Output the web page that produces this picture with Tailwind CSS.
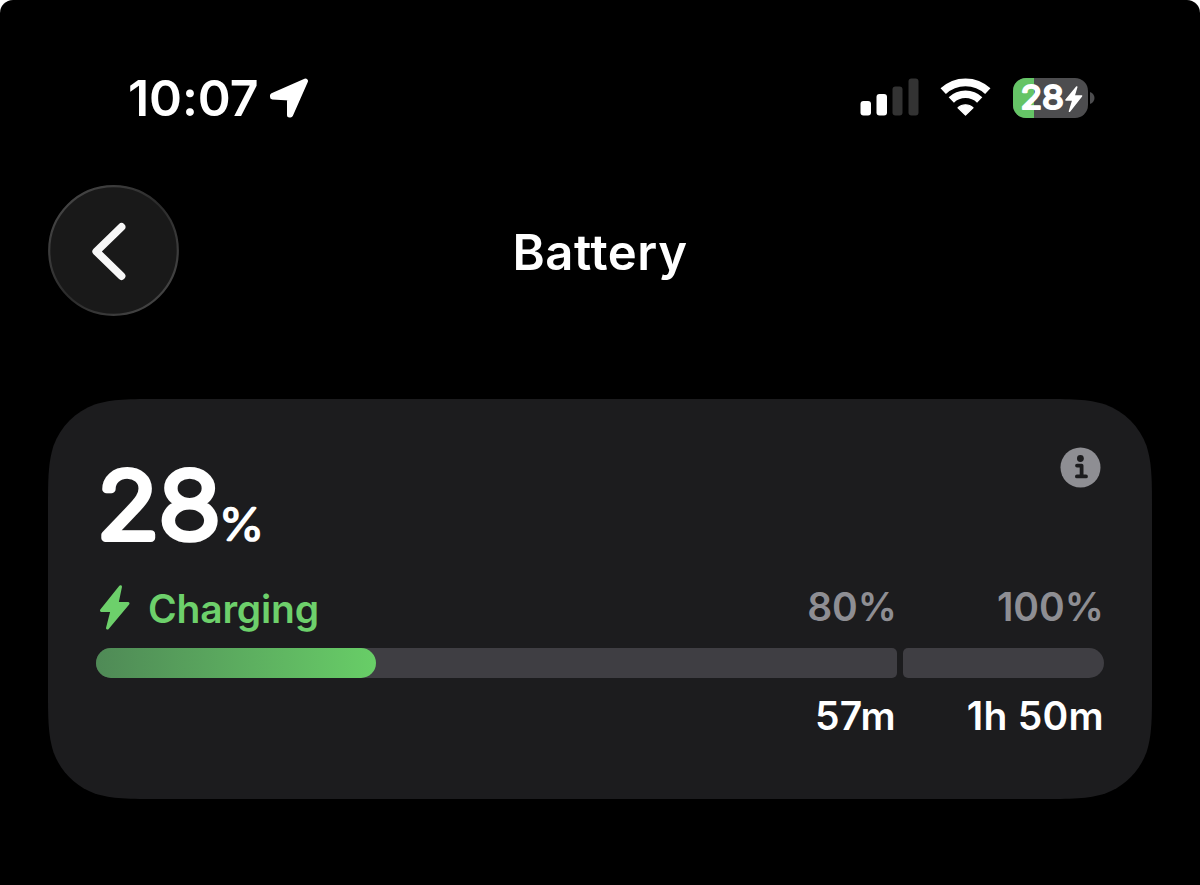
<!DOCTYPE html>
<html lang="en">
<head>
  <meta charset="UTF-8">
  <meta name="viewport" content="width=device-width, initial-scale=1.0">
  <title>Battery</title>
  <script src="https://cdn.jsdelivr.net/npm/@tailwindcss/browser@4"></script>
</head>
<body class="bg-white font-['Inter',sans-serif] text-white">
  <div class="w-[1200px] h-[885px] bg-black rounded-t-[13px] overflow-hidden">

    <!-- Status bar -->
    <header class="flex items-center justify-between h-[120px] pt-[76px] pl-[128px] pr-[105px]">
      <div class="flex items-center">
        <span class="w-[141px] text-[50px] leading-[44px] font-semibold tracking-[-0.1px] whitespace-nowrap">10:07</span>
        <svg class="w-[40px] h-[42px]" viewBox="0 0 40 42" fill="#fff" stroke="#fff" stroke-width="5" stroke-linejoin="round">
          <path d="M3.5 18.5 L36.5 4 L21.5 38 L20.5 38 L20.5 21 L3.5 20 Z"/>
        </svg>
      </div>
      <div class="flex items-center">
        <svg class="w-[59px] h-[44px] mr-[21px]" viewBox="0 0 59 44">
          <rect x="0.5" y="25" width="10.5" height="14.5" rx="3" fill="#fff"/>
          <rect x="16.5" y="18" width="10.5" height="21.5" rx="3" fill="#fff"/>
          <rect x="32.5" y="10.5" width="10" height="29" rx="3" fill="#333"/>
          <rect x="48.5" y="2.5" width="10" height="37" rx="3" fill="#333"/>
        </svg>
        <svg class="w-[51px] h-[44px] mr-[22px]" viewBox="0 0 51 44" fill="none" stroke="#fff">
          <path d="M3.2 15.2 A32.5 32.5 0 0 1 47.8 15.2" stroke-width="7.8"/>
          <path d="M11.3 24 A20.5 20.5 0 0 1 39.7 24" stroke-width="7.6"/>
          <path d="M25.5 39 L18 31.8 A10.8 10.8 0 0 1 33 31.8 Z" fill="#fff" stroke-width="1.2" stroke-linejoin="round"/>
        </svg>
        <div class="relative w-[75px] h-[40px] rounded-[13px] overflow-hidden bg-[#4d4d4f]">
          <div class="w-[21px] h-full bg-[#65c466]"></div>
          <svg class="absolute inset-0 w-[75px] h-[40px]" viewBox="0 0 75 40" fill="#fff">
            <text x="7.5" y="31.3" textLength="43.5" lengthAdjust="spacingAndGlyphs" font-family="Inter, sans-serif" font-size="33" font-weight="400" stroke="#fff" stroke-width="2.2" stroke-linejoin="round">28</text>
            <path d="M63.7 9 L53 22 L60 22 L56.5 33.2 L68.5 18 L61 18 Z" stroke="#fff" stroke-width="1.6" stroke-linejoin="round"/>
          </svg>
        </div>
        <svg class="w-[5px] h-[14px] ml-[2px]" viewBox="0 0 5 14" fill="#4d4d4f"><path d="M0 1 C6 3 6 11 0 13 Z"/></svg>
      </div>
    </header>

    <!-- Navigation bar -->
    <nav class="grid grid-cols-[131px_1fr_131px] items-center mt-[65px] px-[48px]">
      <button class="block size-[131px]" aria-label="Back">
        <svg class="size-[131px]" viewBox="0 0 131 131" fill="none">
          <defs>
            <linearGradient id="rim" x1="0" y1="0" x2="1" y2="1">
              <stop offset="0" stop-color="#4c4c4c"/>
              <stop offset="0.5" stop-color="#2b2b2b"/>
              <stop offset="1" stop-color="#4c4c4c"/>
            </linearGradient>
          </defs>
          <circle cx="65.5" cy="65.5" r="64.3" fill="#191919" stroke="url(#rim)" stroke-width="2.2"/>
          <path d="M73.5 42 L48.3 66.5 L73.5 91" stroke="#f7f7f7" stroke-width="7.8" stroke-linecap="round" stroke-linejoin="round"/>
        </svg>
      </button>
      <h1 class="text-center text-[49px] leading-[60px] font-semibold tracking-[0.6px] pt-[5px]">Battery</h1>
    </nav>

    <!-- Battery card -->
    <main class="relative mt-[83px] mx-[48px] h-[400px] px-[48px]">
      <svg class="absolute inset-0 w-[1104px] h-[400px]" viewBox="0 0 1104 400" fill="#1c1c1e">
        <path d="M113.1 0 H990.9 C1023.5 0 1039.7 0 1057.3 5.5 C1076.4 12.5 1091.5 27.6 1098.5 46.7 C1104 64.3 1104 80.5 1104 113.1 V286.9 C1104 319.5 1104 335.7 1098.5 353.3 C1091.5 372.4 1076.4 387.5 1057.3 394.5 C1039.7 400 1023.5 400 990.9 400 H113.1 C80.5 400 64.3 400 46.7 394.5 C27.6 387.5 12.5 372.4 5.5 353.3 C0 335.7 0 319.5 0 286.9 V113.1 C0 80.5 0 64.3 5.5 46.7 C12.5 27.6 27.6 12.5 46.7 5.5 C64.3 0 80.5 0 113.1 0 Z"/>
      </svg>

      <div class="relative">
        <div class="flex justify-between pt-[48px] h-[180px]">
          <svg class="w-[180px] h-[125px]" viewBox="0 0 180 125" fill="#fff" stroke="#fff" stroke-linejoin="round" font-family="Inter, sans-serif">
            <text x="1" y="90.5" textLength="123" lengthAdjust="spacingAndGlyphs" font-size="91" font-weight="200" stroke-width="8">28</text>
            <text x="123.5" y="92.5" textLength="44" lengthAdjust="spacingAndGlyphs" font-size="43" font-weight="200" stroke-width="2.6">%</text>
          </svg>
          <svg class="size-[41px] mr-[3px]" viewBox="0 0 41 41">
            <circle cx="20.5" cy="20.5" r="20" fill="#8e8e93"/>
            <circle cx="20.4" cy="11.5" r="3.4" fill="#1c1c1e"/>
            <path d="M17 18.6 H21.6 V29.2 M16.9 29.4 H26" fill="none" stroke="#1c1c1e" stroke-width="3.8" stroke-linecap="round" stroke-linejoin="round"/>
          </svg>
        </div>

        <div class="flex h-[69px] pt-[4px] text-[39px] leading-[48px] font-[560] text-[#8e8e93] whitespace-nowrap">
          <div class="flex grow pt-[2px] text-[#6dd06b]">
            <svg class="w-[32px] h-[47px] mr-[17px] ml-[3px]" viewBox="0 0 32 47" fill="#6dd06b" stroke="#6dd06b" stroke-width="3" stroke-linejoin="round">
              <path d="M21.5 1.8 L2.5 25.5 L13 25.5 L8.5 43 L29 18.5 L18 18.5 Z"/>
            </svg>
            <span class="tracking-[-0.2px]">Charging</span>
          </div>
          <span class="w-[207px] text-right">80%</span>
          <span class="w-[207px] text-right">100%</span>
        </div>

        <!-- Charge level -->
        <div class="flex gap-[6px] h-[30px]">
          <div class="w-[802px] rounded-l-[15px] rounded-r-[5px] bg-[#3f3e43]">
            <div class="h-full rounded-full bg-linear-to-r from-[#4f8a56] to-[#68ce67]" style="width: 35%"></div>
          </div>
          <div class="w-[201px] rounded-l-[5px] rounded-r-[15px] bg-[#3f3e43]"></div>
        </div>

        <div class="flex justify-end pt-[14px] text-[39px] leading-[48px] font-semibold tracking-[0.3px] whitespace-nowrap">
          <span>57m</span>
          <span class="w-[208px] text-right">1h 50m</span>
        </div>
      </div>
    </main>

  </div>
</body>
</html>
